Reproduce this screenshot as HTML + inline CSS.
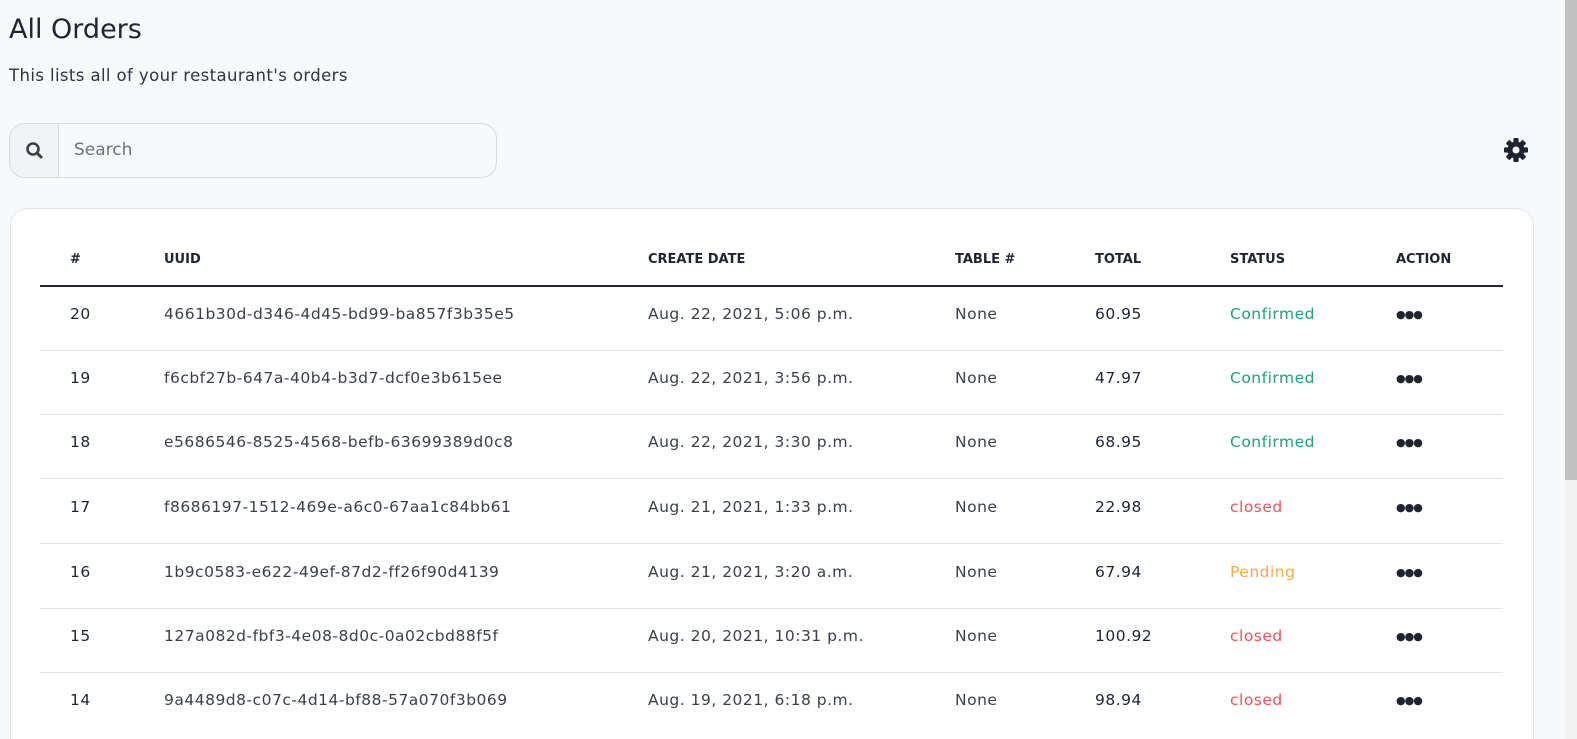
<!DOCTYPE html>
<html style="overflow:hidden"><head><style>
html,body{overflow:hidden}
body{margin:0;width:1577px;height:739px;background:#f8f9fb;font-family:"DejaVu Sans","Liberation Sans",sans-serif;color:#212529;position:relative}
h1{position:absolute;left:9px;top:14px;margin:0;font-size:27px;font-weight:normal;color:#1f2433}
.sub{position:absolute;left:9px;top:66px;font-size:16.5px;letter-spacing:0.4px;color:#2d3340}
.search{position:absolute;left:9px;top:123px;width:486px;height:53px;border:1px solid #d6d9de;border-radius:16px;background:#f8f9fb;overflow:hidden}
.search .ic{position:absolute;left:0;top:0;width:48px;height:53px;border-right:1px solid #d6d9de;background:#f2f3f5}
.search span{position:absolute;left:64px;top:16px;font-size:17px;color:#6c727c}
.card{position:absolute;left:10px;top:208px;width:1522px;height:530px;background:#fff;border:1px solid #e3e5e8;border-bottom:none;border-radius:18px 18px 0 0}
.th{position:absolute;top:252px;font-size:13px;font-weight:bold;color:#1f2433}
.hl{position:absolute;left:40px;top:285px;width:1463px;height:2px;background:#222731}
.c{position:absolute;font-size:15.5px;letter-spacing:0.5px;color:#3a3f48}
.b{color:#1f2433}
.sep{position:absolute;left:40px;width:1463px;height:1px;background:#e3e5e8}
.g{color:#1fa179}.r{color:#f0525a}.o{color:#f7a94a}
.dots{position:absolute;font-size:11px;letter-spacing:-1px;color:#1f2433}
.sb{position:absolute;left:1565px;top:0;width:12px;height:739px;background:#f1f1f1}
.sb div{width:12px;height:480px;background:#c1c1c1}
</style></head><body>
<h1>All Orders</h1>
<div class="sub">This lists all of your restaurant's orders</div>
<div class="search"><div class="ic"><svg width="48" height="53" viewBox="0 0 48 53"><circle cx="23" cy="25" r="5.5" fill="none" stroke="#3a3f48" stroke-width="2.6"/><line x1="27" y1="29" x2="31" y2="33" stroke="#3a3f48" stroke-width="3" stroke-linecap="round"/></svg></div><span>Search</span></div>
<svg style="position:absolute;left:1503px;top:137px" width="26" height="26" viewBox="0 0 26 26"><g fill="#1f2433" transform="translate(13 13)"><g id="t"><rect x="-2.6" y="-12" width="5.2" height="6" rx="1"/></g><use href="#t" transform="rotate(45)"/><use href="#t" transform="rotate(90)"/><use href="#t" transform="rotate(135)"/><use href="#t" transform="rotate(180)"/><use href="#t" transform="rotate(225)"/><use href="#t" transform="rotate(270)"/><use href="#t" transform="rotate(315)"/><circle r="8.5"/><circle r="3.5" fill="#f8f9fb"/></g></svg>
<div class="card"></div>
<div class="th" style="left:70px">#</div>
<div class="th" style="left:164px">UUID</div>
<div class="th" style="left:648px">CREATE DATE</div>
<div class="th" style="left:955px">TABLE #</div>
<div class="th" style="left:1095px">TOTAL</div>
<div class="th" style="left:1230px">STATUS</div>
<div class="th" style="left:1396px">ACTION</div>
<div class="hl"></div>
<div id="rows"></div>
<div class="sb"><div></div></div>
<script>
var d=[["20","4661b30d-d346-4d45-bd99-ba857f3b35e5","Aug. 22, 2021, 5:06 p.m.","60.95","Confirmed","g"],
["19","f6cbf27b-647a-40b4-b3d7-dcf0e3b615ee","Aug. 22, 2021, 3:56 p.m.","47.97","Confirmed","g"],
["18","e5686546-8525-4568-befb-63699389d0c8","Aug. 22, 2021, 3:30 p.m.","68.95","Confirmed","g"],
["17","f8686197-1512-469e-a6c0-67aa1c84bb61","Aug. 21, 2021, 1:33 p.m.","22.98","closed","r"],
["16","1b9c0583-e622-49ef-87d2-ff26f90d4139","Aug. 21, 2021, 3:20 a.m.","67.94","Pending","o"],
["15","127a082d-fbf3-4e08-8d0c-0a02cbd88f5f","Aug. 20, 2021, 10:31 p.m.","100.92","closed","r"],
["14","9a4489d8-c07c-4d14-bf88-57a070f3b069","Aug. 19, 2021, 6:18 p.m.","98.94","closed","r"]];
var tops=[315,379,443,508,573,637,701],h="";
d.forEach(function(r,i){var t=tops[i]-10;
h+='<div class="c b" style="left:70px;top:'+t+'px">'+r[0]+'</div><div class="c" style="left:164px;top:'+t+'px">'+r[1]+'</div><div class="c" style="left:648px;top:'+t+'px">'+r[2]+'</div><div class="c" style="left:955px;top:'+t+'px">None</div><div class="c b" style="left:1095px;top:'+t+'px">'+r[3]+'</div><div class="c '+r[5]+'" style="left:1230px;top:'+t+'px">'+r[4]+'</div><div class="dots" style="left:1396px;top:'+(t+3)+'px">●●●</div>';
if(i<6)h+='<div class="sep" style="top:'+(tops[i]+35)+'px"></div>';});
document.getElementById('rows').innerHTML=h;
</script>
</body></html>
